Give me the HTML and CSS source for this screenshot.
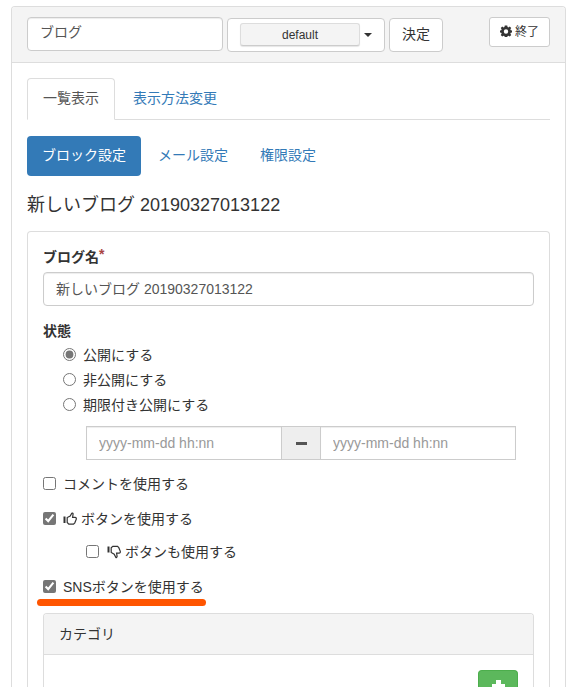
FILE: index.html
```
<!DOCTYPE html>
<html lang="ja">

<head>
  <meta charset="utf-8">
  <title>ブログ</title>
  <link rel="stylesheet" href="styles.css">
</head>

<body>
  <div class="panel frame">
    <div class="panel-heading frame-heading">
      <input type="text" class="form-control frame-name" value="ブログ">
      <button type="button" class="btn btn-select"><span class="select-label">default</span><span class="caret"></span></button>
      <button type="button" class="btn">決定</button>
      <a class="btn btn-sm" href="#">
        <svg class="icon-cog" viewBox="0 0 24 24"><path fill-rule="evenodd" d="M9.500 1h5l.6 3 1.800.8 2.600-1.800 3 3-1.800 2.600.8 1.800 2.500.5v4.300l-2.500.5-.8 1.800 1.800 2.600-3 3-2.600-1.800-1.800.8-.6 2.900h-5l-.6-2.900-1.800-.8-2.600 1.800-3-3 1.800-2.600-.8-1.800L0 15.200v-4.300l2.500-.5.8-1.800L1.500 6l3-3 2.600 1.800 1.800-.8zM12 8.500a4.400 4.400 0 1 0 0 8.800a4.400 4.400 0 1 0 0-8.800z"/></svg>
        終了</a>
    </div>
    <div class="panel-body">
      <!-- タブ -->
      <ul class="nav nav-tabs">
        <li class="active"><a href="#">一覧表示</a></li>
        <li><a href="#">表示方法変更</a></li>
      </ul>
      <ul class="nav nav-pills">
        <li class="active"><a href="#">ブロック設定</a></li>
        <li><a href="#">メール設定</a></li>
        <li><a href="#">権限設定</a></li>
      </ul>
      <h4>新しいブログ 20190327013122</h4>

      <!-- 編集フォーム -->
      <form class="panel edit-form" action="">
        <div class="panel-body">
          <label class="control-label">ブログ名<span class="required">*</span></label>
          <input type="text" class="form-control blog-name" value="新しいブログ 20190327013122">

          <div class="control-label status-label">状態</div>
          <div class="radios">
            <label class="choice"><input type="radio" name="status" checked>公開にする</label>
            <label class="choice"><input type="radio" name="status">非公開にする</label>
            <label class="choice"><input type="radio" name="status">期限付き公開にする</label>
          </div>
          <div class="input-group">
            <input type="text" class="form-control" placeholder="yyyy-mm-dd hh:nn">
            <span class="addon"><span class="minus"></span></span>
            <input type="text" class="form-control" placeholder="yyyy-mm-dd hh:nn">
          </div>

          <label class="choice check-comment"><input type="checkbox">コメントを使用する</label>
          <label class="choice check-like"><input type="checkbox" checked>
            <svg class="icon-thumb" viewBox="0 0 14 14"><path class="fill" d="M.5 4.500h2v6.500h-2z"/><path d="M4.200 5.500v5l1.600 1.700h4.700l1.300-1.400 1.500-3.600q.2-1.700-1.200-1.800H9.600l.5-3.600Q9.600.8 8.800 1.300L7.200 4z"/></svg>
            ボタンを使用する</label>
          <label class="choice check-unlike"><input type="checkbox">
            <svg class="icon-thumb" viewBox="0 0 14 14"><path class="fill" d="M.5 1.500h2v6h-2z"/><path d="M4.200 7.500V2.800l1.600-1.500h4.700l1.300 1.400 1.500 3.600q.2 1.700-1.200 1.800H9.600l.5 3.400q-.5 1.400-1.300.9L7.200 9.300z"/></svg>
            ボタンも使用する</label>
          <label class="choice check-sns"><input type="checkbox" checked>SNSボタンを使用する</label>

          <div class="panel category">
            <div class="panel-heading">カテゴリ</div>
            <div class="panel-body">
              <button type="button" class="btn btn-success"><span class="plus"></span></button>
            </div>
          </div>
        </div>
      </form>
    </div>
  </div>
</body>

</html>
```

FILE: styles.css
```
* {
  box-sizing: border-box;
}

body {
  margin: 0;
  padding: 6px 17px 0 11px;
  font-family: "Liberation Sans", "Noto Sans CJK JP", sans-serif;
  font-size: 14px;
  line-height: 20px;
  color: #333;
  background-color: #fff;
}

a {
  color: #337ab7;
  text-decoration: none;
}

.panel {
  border: 1px solid #ddd;
  border-radius: 4px;
  background-color: #fff;
}

.panel-heading {
  height: 41px;
  padding: 10px 15px;
  background-color: #f4f4f4;
  border-bottom: 1px solid #ddd;
  border-radius: 3px 3px 0 0;
}

.panel-body {
  padding: 15px;
}

.frame {
  height: 681px;
  border-bottom: none;
  border-radius: 4px 4px 0 0;
}

.frame-heading {
  display: flex;
  align-items: flex-start;
  height: 56px;
}

.frame > .panel-body {
  padding-bottom: 0;
}

.form-control {
  display: block;
  width: 100%;
  height: 34px;
  padding: 6px 12px;
  font: inherit;
  color: #555;
  background-color: #fff;
  border: 1px solid #ccc;
  border-radius: 4px;
  box-shadow: inset 0 1px 1px rgba(0, 0, 0, .075);
}

.form-control::placeholder {
  color: #999;
}

.frame-name {
  width: 196px;
  padding: 3px 12px 9px;
}

.blog-name {
  padding: 5px 12px 7px;
}

.btn {
  height: 34px;
  margin: 1px 0 0 4px;
  padding: 4px 12px 6px;
  font: inherit;
  color: #333;
  background-color: #fff;
  border: 1px solid #ccc;
  border-radius: 4px;
  white-space: nowrap;
}

.btn-select {
  display: flex;
  align-items: center;
  width: 158px;
  padding: 0 12px;
}

.select-label {
  width: 120px;
  height: 23px;
  margin-top: -1px;
  font-size: 12px;
  line-height: 22px;
  background-color: #f4f4f4;
  border: 1px solid #ddd;
  border-bottom-color: #ccc;
  border-radius: 3px;
  box-shadow: 0 1px 1px rgba(0, 0, 0, .1);
}

.caret {
  margin-left: 4px;
  border-top: 4px solid #333;
  border-left: 4px solid transparent;
  border-right: 4px solid transparent;
}

.btn-sm {
  display: flex;
  align-items: center;
  gap: 3px;
  height: 30px;
  margin: 0 0 0 auto;
  padding: 0 10px 1px;
  font-size: 12px;
  border-radius: 3px;
}

.icon-cog {
  width: 12px;
  height: 12px;
  margin-top: -1px;
  fill: #333;
}

.nav {
  display: flex;
  margin: 0;
  padding: 0;
  list-style: none;
}

.nav a {
  display: block;
  padding: 9px 15px 11px;
  height: 40px;
  border-radius: 4px;
}

.nav-tabs {
  height: 42px;
  border-bottom: 1px solid #ddd;
}

.nav-tabs li {
  margin-right: 2px;
}

.nav-tabs a {
  height: 42px;
  border: 1px solid transparent;
  border-radius: 4px 4px 0 0;
}

.nav-tabs .active a {
  color: #555;
  background-color: #fff;
  border-color: #ddd;
  border-bottom-color: #fff;
}

.nav-pills {
  margin-top: 16px;
}

.nav-pills li + li {
  margin-left: 2px;
}

.nav-pills .active a {
  color: #fff;
  background-color: #337ab7;
}

h4 {
  height: 20px;
  margin: 19px 0 16px;
  font-size: 18px;
  font-weight: normal;
  line-height: 20px;
}

.edit-form {
  height: 456px;
  border-bottom: none;
  border-radius: 4px 4px 0 0;
}

.edit-form > .panel-body {
  padding-bottom: 0;
}

.control-label {
  display: block;
  height: 20px;
  margin-bottom: 5px;
  font-weight: bold;
}

.required {
  color: #a94442;
  position: relative;
  top: -3px;
}

.status-label {
  margin-top: 15px;
  margin-bottom: 2px;
}

.radios {
  margin-left: 20px;
}

.choice {
  display: flex;
  align-items: center;
  height: 25px;
  padding-bottom: 1px;
}

.choice input {
  width: 13px;
  height: 13px;
  margin: -2px 7px 0 0;
  accent-color: #767676;
}

.input-group {
  display: flex;
  width: 430px;
  margin: 8px 0 0 43px;
}

.input-group .form-control {
  width: 196px;
  border-radius: 0;
}

.addon {
  display: flex;
  flex: 1;
  align-items: center;
  justify-content: center;
  background-color: #eee;
  border: solid #ccc;
  border-width: 1px 0;
}

.minus {
  width: 11px;
  height: 3px;
  background-color: #555;
}

.check-comment {
  margin-top: 12px;
}

.check-like {
  margin-top: 10px;
}

.check-unlike {
  margin: 8px 0 0 43px;
}

.check-sns {
  position: relative;
  margin-top: 10px;
}

/* 下線 */
.check-sns::after {
  content: "";
  position: absolute;
  left: -6px;
  top: 24px;
  width: 169px;
  height: 7px;
  border-radius: 4px;
  background-color: #ff5500;
}

.icon-thumb {
  width: 14px;
  height: 14px;
  margin: -1px 4px 0 0;
  fill: none;
  stroke: #333;
  stroke-width: 1.2;
}

.icon-thumb .fill {
  fill: #333;
  stroke: none;
}

.check-unlike .icon-thumb {
  margin-left: 1px;
}

.category {
  height: 74px;
  margin-top: 13px;
  border-bottom: none;
  border-radius: 4px 4px 0 0;
}

.category .panel-body {
  display: flex;
  justify-content: flex-end;
  padding-bottom: 0;
}

.btn-success {
  display: flex;
  justify-content: center;
  width: 40px;
  height: 17px;
  margin: 0;
  padding: 9px 0 0;
  overflow: hidden;
  background-color: #5cb85c;
  border-color: #4cae4c;
  border-bottom: none;
  border-radius: 4px 4px 0 0;
}

.plus {
  flex: none;
  width: 13px;
  height: 7px;
  background: linear-gradient(#fff, #fff) 0 4px / 13px 5px no-repeat, linear-gradient(#fff, #fff) 4px 0 / 5px 13px no-repeat;
}
```
